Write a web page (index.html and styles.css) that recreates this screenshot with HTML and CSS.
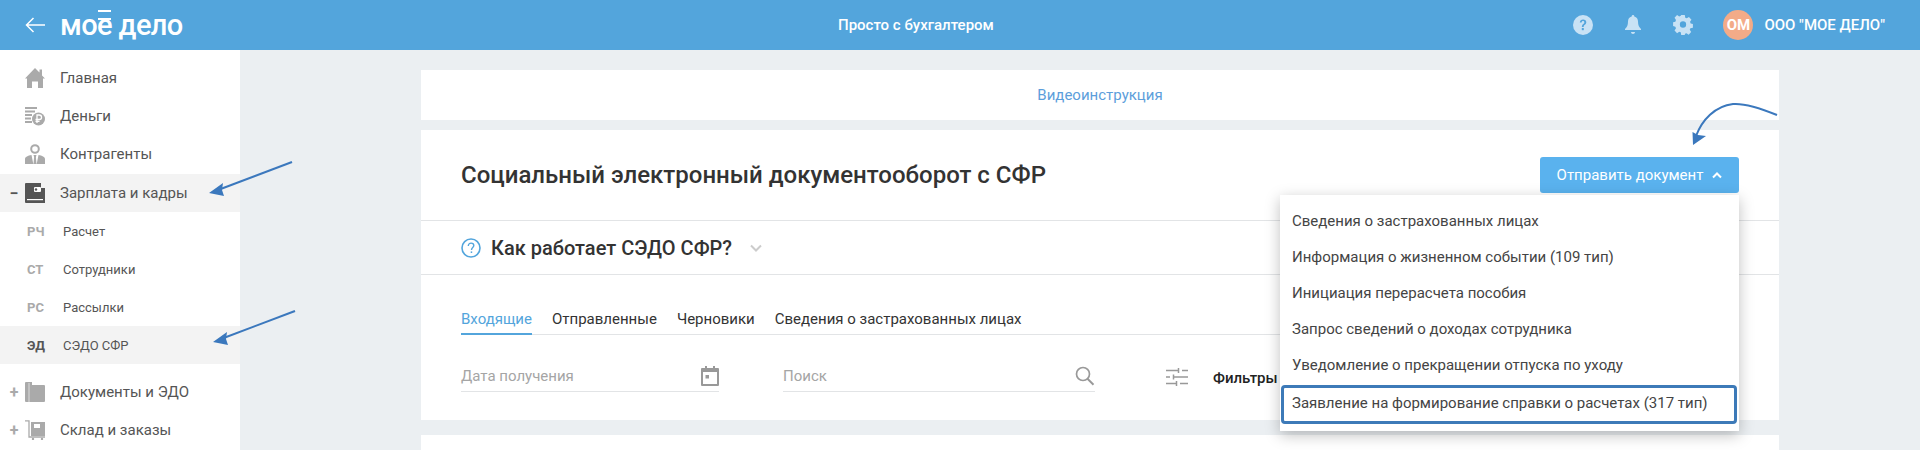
FILE: index.html
```html
<!DOCTYPE html>
<html lang="ru">
<head>
<meta charset="utf-8">
<title>Моё дело</title>
<link rel="stylesheet" href="styles.css">
</head>
<body>
<header class="topbar">
  <div class="brand">
    <svg class="back" width="20" height="16" viewBox="0 0 20 16"><path d="M20 8H1.500M8.500 1 1.500 8l7 7" fill="none" stroke="#fff" stroke-width="1.500"/></svg>
    <span class="logo">мо<span class="logo-e">е</span> дело</span>
  </div>
  <div class="slogan">Просто с бухгалтером</div>
  <div class="top-actions">
    <svg class="top-icon" width="20" height="20" viewBox="0 0 20 20"><circle cx="10" cy="10" r="10" fill="#c8e2f5"/><path d="M6.800 7.600C6.900 5.600 8.200 4.600 10.100 4.600c1.900 0 3.200 1.100 3.200 2.700 0 2.500-2.600 2.400-2.600 4.600H8.900c0-3.100 2.400-3 2.400-4.500 0-.8-.5-1.300-1.300-1.300-.9 0-1.300.6-1.400 1.500Z" fill="#53a5dc"/><rect x="8.800" y="13" width="2" height="2.200" fill="#53a5dc"/></svg>
    <svg class="top-icon" width="16" height="20" viewBox="0 0 16 20"><path d="M8 0c.8 0 1.300.6 1.300 1.400C11.800 2 13 4 13 6.500c0 4 1 5.500 3 7.500v1H0v-1c2-2 3-3.500 3-7.500C3 4 4.200 2 6.700 1.400 6.700.6 7.200 0 8 0ZM6 17h4c0 1-.9 2-2 2s-2-1-2-2Z" fill="#c8e2f5"/></svg>
    <svg class="top-icon" width="20" height="20" viewBox="0 0 20 20"><path d="M8 0h4l.5 2.800 1.700.7L16.600 2l2.800 2.900-1.600 2.300.7 1.700 2.500.5v4l-2.800.5-.7 1.700 1.600 2.300-2.800 2.800-2.400-1.600-1.700.7L12 21H8l-.5-2.800-1.700-.7-2.400 1.600L.6 16.300l1.600-2.300-.7-1.700L-1 11.500v-4l2.500-.5.7-1.800L.6 2.900 3.400 0l2.400 1.600 1.700-.7Zm2 6.500a3.500 3.500 0 1 0 0 7 3.500 3.500 0 0 0 0-7Z" transform="translate(1 0) scale(.9 .95)" fill="#c8e2f5" fill-rule="evenodd"/></svg>
    <span class="avatar">ОМ</span>
    <span class="company">ООО "МОЕ ДЕЛО"</span>
  </div>
</header>

<div class="layout">
  <aside class="sidebar">
    <nav class="menu">
      <a class="item">
        <svg class="item-icon" width="20" height="20" viewBox="0 0 20 20"><path d="M10 0 14.500 4.500V1.500h2.500V7.500L20 10.500h-2V20h-5v-6.500H7V20H2V10.500H0Z" fill="#aaa"/></svg>
        <span>Главная</span>
      </a>
      <a class="item">
        <svg class="item-icon" width="20" height="20" viewBox="0 0 20 20"><g fill="#aaa"><rect width="12" height="2" y="1"/><rect width="10" height="2" y="4.500"/><rect width="7" height="2" y="8"/><rect width="6" height="2" y="11.500"/><rect width="7" height="2" y="15"/><circle cx="13.500" cy="13" r="6.500"/></g><path d="M12 17v-8h2.300a2.200 2.200 0 0 1 0 4.500H10.500M10.500 15.300h4" fill="none" stroke="#fff" stroke-width="1.300"/></svg>
        <span>Деньги</span>
      </a>
      <a class="item">
        <svg class="item-icon" width="20" height="20" viewBox="0 0 20 20"><circle cx="10" cy="5" r="3.800" fill="none" stroke="#aaa" stroke-width="2"/><path d="M0 20v-5c0-2 3-3.500 6.500-4L8.300 20Zm20 0v-5c0-2-3-3.500-6.500-4L11.700 20ZM8.500 11h3l-.6 2 .6 7h-3l.6-7Z" fill="#aaa"/></svg>
        <span>Контрагенты</span>
      </a>
      <a class="item is-open">
        <span class="toggle">−</span>
        <svg class="item-icon" width="20" height="20" viewBox="0 0 20 20"><path d="M1 0h15v5h4v15H1a1 1 0 0 1-1-1V1a1 1 0 0 1 1-1Z" fill="#555"/><rect x="2" y="16" width="16" height="1.200" fill="#fff"/><rect x="9" y="4" width="7" height="5" rx="1" fill="#fff"/><circle cx="11" cy="6.500" r="1.200" fill="#555"/></svg>
        <span>Зарплата и кадры</span>
      </a>
      <a class="sub"><b>РЧ</b><span>Расчет</span></a>
      <a class="sub"><b>СТ</b><span>Сотрудники</span></a>
      <a class="sub"><b>РС</b><span>Рассылки</span></a>
      <a class="sub is-active"><b>ЭД</b><span>СЭДО СФР</span></a>
      <a class="item item-gap">
        <span class="toggle">+</span>
        <svg class="item-icon" width="20" height="20" viewBox="0 0 20 20"><path d="M1 0h6v3h12a1 1 0 0 1 1 1v15a1 1 0 0 1-1 1H1a1 1 0 0 1-1-1V1a1 1 0 0 1 1-1Z" fill="#aaa"/><rect x="3.500" y="1" width="1" height="19" fill="#fff" opacity=".6"/></svg>
        <span>Документы и ЭДО</span>
      </a>
      <a class="item">
        <span class="toggle">+</span>
        <svg class="item-icon" width="20" height="20" viewBox="0 0 20 20"><path d="M0 .8h4V17h16" fill="none" stroke="#aaa" stroke-width="1.300"/><path d="M6 2h14v14H6Z" fill="#aaa"/><rect x="9" y="4" width="6" height="4" fill="#fff"/><circle cx="8" cy="19" r="1.200" fill="#aaa"/><circle cx="17" cy="19" r="1.200" fill="#aaa"/></svg>
        <span>Склад и заказы</span>
      </a>
    </nav>
  </aside>

  <main class="content">
    <section class="card video"><a class="video-link">Видеоинструкция</a></section>

    <section class="card panel">
      <div class="title-row">
        <h1>Социальный электронный документооборот с СФР</h1>
        <div class="send-wrap">
          <button class="send">Отправить документ
            <svg width="10" height="7" viewBox="0 0 10 7"><path d="M1 5.500 5 1.500l4 4" fill="none" stroke="#fff" stroke-width="2"/></svg>
          </button>
          <ul class="dropdown">
            <li>Сведения о застрахованных лицах</li>
            <li>Информация о жизненном событии (109 тип)</li>
            <li>Инициация перерасчета пособия</li>
            <li>Запрос сведений о доходах сотрудника</li>
            <li>Уведомление о прекращении отпуска по уходу</li>
            <li class="marked">Заявление на формирование справки о расчетах (317 тип)</li>
          </ul>
        </div>
      </div>
      <div class="how-row">
        <svg width="20" height="20" viewBox="0 0 20 20"><circle cx="10" cy="10" r="9" fill="none" stroke="#53a5dc" stroke-width="1.600"/><path d="M7.300 8c0-1.800 1.200-2.900 2.800-2.900s2.700 1 2.700 2.400c0 2.100-2.300 2.100-2.300 4.400" fill="none" stroke="#53a5dc" stroke-width="1.400"/><rect x="9.700" y="13.400" width="1.500" height="1.600" fill="#53a5dc"/></svg>
        <h2>Как работает СЭДО СФР?</h2>
        <svg width="12" height="8" viewBox="0 0 12 8"><path d="M1 1.500 6 6.500l5-5" fill="none" stroke="#ccc" stroke-width="2"/></svg>
      </div>
      <div class="tabs-area">
        <div class="tabs">
          <a class="tab is-current">Входящие</a>
          <a class="tab">Отправленные</a>
          <a class="tab">Черновики</a>
          <a class="tab">Сведения о застрахованных лицах</a>
        </div>
        <div class="filters">
          <div class="field field-date">
            <span>Дата получения</span>
            <svg width="18" height="20" viewBox="0 0 18 20"><path d="M1 2h3V0h2v2h6V0h2v2h3a1 1 0 0 1 1 1v16a1 1 0 0 1-1 1H1a1 1 0 0 1-1-1V3a1 1 0 0 1 1-1Z" fill="#999"/><rect x="2" y="6" width="14" height="12" fill="#fff"/><rect x="4.500" y="9" width="3.500" height="3.500" fill="#999"/></svg>
          </div>
          <div class="field field-search">
            <span>Поиск</span>
            <svg width="20" height="20" viewBox="0 0 20 20"><circle cx="8" cy="8" r="6.500" fill="none" stroke="#999" stroke-width="1.700"/><path d="m12.500 12.800 6 6" fill="none" stroke="#999" stroke-width="2"/></svg>
          </div>
          <svg class="sliders" width="22" height="20" viewBox="0 0 22 20"><path d="M0 3.500h12M16 3.500h6M12.500 1v5M0 10h4M8 10h14M7.500 7.500v5M0 16.500h10M14 16.500h8M10.500 14v5" fill="none" stroke="#999" stroke-width="1.500"/></svg>
          <span class="filters-label">Фильтры</span>
        </div>
      </div>
    </section>

    <section class="card rest"></section>
  </main>
</div>

<svg class="annotations" width="1920" height="450" viewBox="0 0 1920 450">
  <g fill="none" stroke="#3b78bd" stroke-width="2">
    <path d="M292 162 218 190"/>
    <path d="M295 311 221 339"/>
    <path d="M1777 115C1760 108 1745 103 1733 104 1715 106 1702 120 1696 136"/>
  </g>
  <g fill="#3b78bd">
    <path d="m209 193 14-10-1 7 2 6Z"/>
    <path d="m213 342 14-10-1 7 2 6Z"/>
    <path d="M1693 145 1692.500 132 1698 135 1706 136Z"/>
  </g>
</svg>
</body>
</html>
```

FILE: styles.css
```css
* { box-sizing: border-box; }
html, body { margin: 0; height: 450px; overflow: hidden; }
body {
  position: relative;
  background: #ebeff2;
  font-family: Roboto, "Liberation Sans", sans-serif;
  font-size: 15px;
  color: #333;
}
h1, h2, ul { margin: 0; padding: 0; }
li { list-style: none; }

.topbar {
  height: 50px;
  display: flex;
  align-items: center;
  justify-content: space-between;
  position: relative;
  background: #53a5dc;
  color: #fff;
}
.brand { display: flex; align-items: center; gap: 15px; padding-left: 25px; }
.back { display: block; }
.logo { font-family: Roboto, sans-serif; font-size: 29px; line-height: 34px; font-weight: 500; letter-spacing: -.6px; }
.logo-e { position: relative; }
.logo-e::before {
  content: "";
  position: absolute;
  left: 1px;
  right: 1px;
  top: 2px;
  height: 6px;
  border-top: 2px solid #fff;
  border-bottom: 2px solid #fff;
}
.slogan {
  position: absolute;
  left: 838px;
  font-weight: 500;
  font-size: 15px;
}
.top-actions { display: flex; align-items: center; padding-right: 35px; }
.top-icon { display: block; margin-right: 32px; }
.top-icon:nth-child(3) { margin-right: 30px; }
.avatar {
  width: 30px;
  height: 30px;
  border-radius: 50%;
  background: #f3ab88;
  display: flex;
  align-items: center;
  justify-content: center;
  font-weight: 700;
  font-size: 15px;
  margin-right: 11px;
}
.company { font-weight: 500; font-size: 15px; }

.layout { display: flex; height: 400px; }
.sidebar { width: 240px; flex: none; background: #fff; padding-top: 9px; }
.menu { display: flex; flex-direction: column; }
.item {
  height: 38px;
  flex: none;
  display: flex;
  align-items: center;
  padding-left: 25px;
  position: relative;
  font-size: 15px;
  color: #555;
}
.item-icon { margin-right: 15px; flex: none; }
.is-open { background: #f3f3f3; margin-top: 1px; }
.toggle {
  position: absolute;
  left: 9px;
  width: 10px;
  text-align: center;
  font-size: 16px;
  font-weight: 700;
  color: #aaa;
}
.is-open .toggle { color: #555; }
.sub {
  height: 38px;
  flex: none;
  display: flex;
  align-items: center;
  padding-left: 27px;
  font-size: 13px;
  color: #555;
}
.sub b { width: 36px; flex: none; font-size: 13px; color: #aaa; }
.is-active { background: #f3f3f3; }
.is-active b { color: #555; }
.item-gap { margin-top: 9px; }

.content { width: 1358px; margin-left: 181px; padding-top: 20px; display: flex; flex-direction: column; gap: 10px; }
.card { background: #fff; flex: none; }
.video { height: 50px; display: flex; align-items: center; justify-content: center; }
.video-link { color: #5c9edb; font-size: 15px; }
.panel { height: 290px; margin-bottom: 5px; }
.rest { height: 15px; }

.title-row {
  height: 91px;
  padding: 0 40px;
  display: flex;
  align-items: center;
  justify-content: space-between;
  border-bottom: 1px solid #e2e4e6;
}
h1 { font-size: 24px; font-weight: 500; color: #333; }
.send-wrap { position: relative; }
.send {
  width: 199px;
  height: 36px;
  border: 0;
  border-radius: 3px;
  background: #5ab2ee;
  color: #fff;
  font: 15px Roboto, sans-serif;
  display: flex;
  align-items: center;
  justify-content: center;
  gap: 9px;
}
.dropdown {
  position: absolute;
  z-index: 2;
  right: 0;
  top: 38px;
  width: 459px;
  height: 236px;
  padding-top: 8px;
  background: #fff;
  box-shadow: 0 4px 14px rgba(0, 0, 0, .25);
}
.dropdown li { height: 36px; padding-left: 12px; line-height: 36px; font-size: 15px; color: #444; }
.dropdown .marked {
  height: 39px;
  margin: 2px 2px 0 1px;
  padding-left: 8px;
  line-height: 31px;
  border: 3px solid #3d7ab8;
  border-radius: 4px;
}

.how-row {
  height: 54px;
  padding: 0 40px;
  display: flex;
  align-items: center;
  gap: 10px;
  border-bottom: 1px solid #e2e4e6;
}
h2 { font-size: 20px; font-weight: 500; color: #333; margin-right: 8px; }

.tabs-area { padding: 0 40px; }
.tabs {
  height: 60px;
  display: flex;
  align-items: flex-end;
  gap: 20px;
  border-bottom: 1px solid #e2e4e6;
}
.tab { height: 25px; font-size: 15px; color: #333; margin-bottom: -1px; }
.is-current { color: #53a5dc; border-bottom: 2px solid #53a5dc; }
.filters { display: flex; align-items: flex-end; height: 57px; }
.field {
  height: 40px;
  padding-top: 8px;
  display: flex;
  align-items: center;
  justify-content: space-between;
  border-bottom: 1px solid #e2e4e6;
  color: #a5a5a5;
}
.field-date { width: 258px; margin-right: 64px; }
.field-search { width: 312px; margin-right: 71px; }
.sliders { margin-bottom: 5px; margin-right: 25px; }
.filters-label { font-size: 15px; font-weight: 500; color: #222; margin-bottom: 5px; }

.annotations { position: absolute; left: 0; top: 0; z-index: 3; pointer-events: none; }
```
